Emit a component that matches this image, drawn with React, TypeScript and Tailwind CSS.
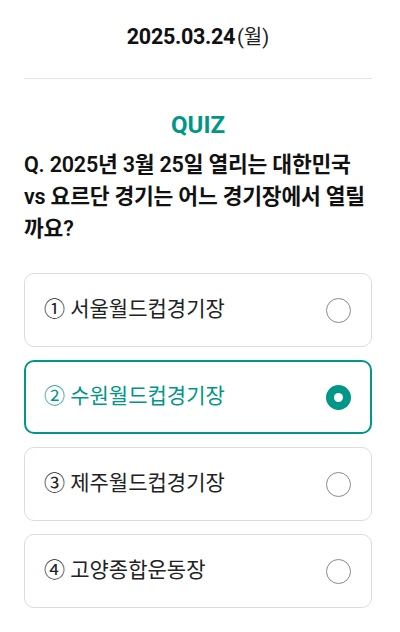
import React from "react";

const options = [
  { n: "①", label: "서울월드컵경기장" },
  { n: "②", label: "수원월드컵경기장" },
  { n: "③", label: "제주월드컵경기장" },
  { n: "④", label: "고양종합운동장" },
];

export default function App() {
  const selected = 1;
  return (
    <div
      className="w-[400px] h-[632px] bg-white overflow-hidden"
      style={{ fontFamily: 'Roboto, "Noto Sans CJK KR", sans-serif' }}
    >
      <div className="pl-6 pr-[28px]">
        <div className="h-[79px] flex items-center justify-center pb-[4px] border-b border-[#e5e5e5]">
          <span className="text-[21.5px] font-bold text-[#111] tracking-[-0.3px]">2025.03.24</span>
          <span className="text-[20px] text-[#222] ml-[2px]">(월)</span>
        </div>
        <div className="pt-[31px] text-center text-[24px] leading-[30px] font-bold text-[#009688]">QUIZ</div>
        <div className="mt-[9px] text-[21.5px] leading-[32px] font-semibold text-[#111] tracking-[-0.2px]">
          Q. 2025년 3월 25일 열리는 대한민국 vs 요르단 경기는 어느 경기장에서 열릴까요?
        </div>
        <div className="mt-[28px] flex flex-col gap-[13px]">
          {options.map((o, i) => {
            const sel = i === selected;
            return (
              <div
                key={i}
                className={
                  sel
                    ? "h-[74px] rounded-[10px] border-2 border-[#009688] flex items-center pl-[18px] pr-[19px]"
                    : "h-[74px] rounded-[10px] border border-[#dcdcdc] flex items-center pl-[19px] pr-[20px]"
                }
              >
                <span
                  className={
                    sel
                      ? "flex-1 text-[21px] text-[#009688]"
                      : "flex-1 text-[21px] text-[#222]"
                  }
                >
                  {o.n} {o.label}
                </span>
                {sel ? (
                  <span className="w-[25px] h-[25px] rounded-full bg-[#009688] flex items-center justify-center">
                    <span className="w-[9px] h-[9px] rounded-full bg-white" />
                  </span>
                ) : (
                  <span className="w-[25px] h-[25px] rounded-full border border-[#8a8a8a]" />
                )}
              </div>
            );
          })}
        </div>
      </div>
    </div>
  );
}
